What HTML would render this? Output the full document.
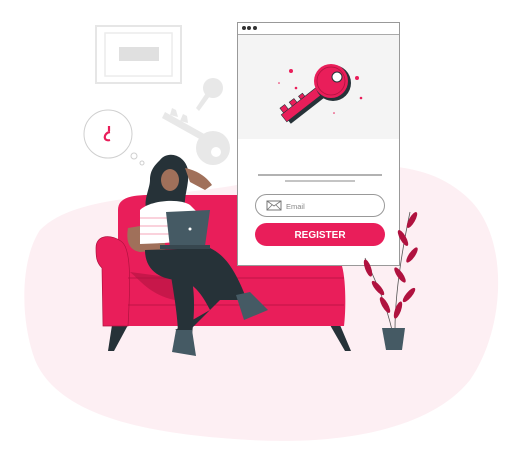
<!DOCTYPE html>
<html><head><style>
html,body{margin:0;padding:0;background:#fff;width:517px;height:455px;overflow:hidden}
svg{display:block}
text{font-family:"Liberation Sans",sans-serif}
</style></head><body>
<svg width="517" height="455" viewBox="0 0 517 455" xmlns="http://www.w3.org/2000/svg">
<path d="M40 230 C80 190 180 200 260 180 C340 165 420 150 470 200 C510 240 505 330 470 380 C430 430 340 445 250 440 C160 435 60 420 35 360 C20 320 20 260 40 230Z" fill="#fdeff3"/>
<rect x="96" y="26" width="85" height="57" fill="#fff" stroke="#e6e6e6" stroke-width="2"/>
<rect x="105" y="33" width="67" height="43" fill="none" stroke="#ececec" stroke-width="1.5"/>
<rect x="119" y="47" width="40" height="14" fill="#e0e0e0"/>
<g fill="#e8e8e8">
<circle cx="213" cy="88" r="10"/><path d="M206 93 L196 108 L199 111 L210 96Z"/>
<path d="M165 112 L215 140 L212 146 L162 118Z"/><path d="M170 115 L172 108 L176 110 L178 117Z M180 121 L183 114 L187 116 L188 123Z"/><circle cx="213" cy="148" r="17"/>
</g>
<circle cx="216" cy="152" r="5" fill="#fff"/>
<circle cx="108" cy="134" r="24" fill="#fff" stroke="#cfcfcf"/>
<circle cx="134" cy="156" r="3" fill="#fff" stroke="#cfcfcf"/>
<circle cx="142" cy="163" r="2" fill="#fff" stroke="#cfcfcf"/>
<path d="M109 126 L109 131 M110 132 C103 133 103 142 110 140" stroke="#e91e5a" stroke-width="2.2" fill="none"/>
<rect x="237.5" y="22.5" width="162" height="243" fill="#fff" stroke="#999"/>
<rect x="238" y="35" width="161" height="104" fill="#f4f4f4"/>
<line x1="238" y1="34.5" x2="399" y2="34.5" stroke="#aaa"/>
<circle cx="244" cy="28" r="2" fill="#333"/><circle cx="249" cy="28" r="2" fill="#333"/><circle cx="255" cy="28" r="2" fill="#333"/>
<!-- red key -->
<g transform="rotate(-38 331 81)">
<rect x="273" y="80" width="46" height="10" fill="#263238"/>
<path d="M271 77 L318 77 L318 86 L271 86 Z M274 77 L274 71 L280 71 L280 77 Z M285 77 L285 72 L291 72 L291 77 Z M296 77 L296 73 L301 73 L301 77 Z" fill="#e91e5a" stroke="#263238" stroke-width="0.6"/>
</g>
<circle cx="333" cy="83" r="18" fill="#263238"/>
<circle cx="331" cy="81" r="17" fill="#e91e5a"/>
<circle cx="331" cy="81" r="14" fill="none" stroke="#b0123f" stroke-width="0.8"/>
<circle cx="337" cy="77" r="5" fill="#fff" stroke="#263238"/>
<g fill="#e91e5a"><circle cx="291" cy="71" r="2"/><circle cx="357" cy="78" r="2"/><circle cx="296" cy="88" r="1.3"/><circle cx="361" cy="98" r="1.3"/><circle cx="279" cy="83" r="0.8"/><circle cx="334" cy="113" r="0.8"/></g>
<line x1="258" y1="175" x2="382" y2="175" stroke="#666" stroke-width="1"/>
<line x1="285" y1="181" x2="355" y2="181" stroke="#888" stroke-width="1"/>
<rect x="255.5" y="194.5" width="129" height="22" rx="11" fill="#fff" stroke="#999"/>
<rect x="267" y="201" width="14" height="9" fill="none" stroke="#777"/>
<path d="M267 201 L274 206 L281 201 M267 210 L272 205 M281 210 L276 205" stroke="#777" fill="none" stroke-width="0.8"/>
<text x="286" y="209" font-size="7.5" fill="#888">Email</text>
<rect x="255" y="223" width="130" height="23" rx="11.5" fill="#e91e5a"/>
<text x="320" y="238" font-size="10" fill="#fff" text-anchor="middle" font-weight="bold">REGISTER</text>
<path d="M112 325 L108 351 L114 351 L128 325Z" fill="#263238"/>
<path d="M330 325 L345 351 L351 351 L340 325Z" fill="#263238"/>
<path d="M118 210 C118 198 130 195 150 195 L237 195 L237 266 L330 266 L342 266 C346 280 346 310 344 326 L104 326 L104 260 L118 255Z" fill="#e91e5a"/>
<path d="M96 248 C96 234 112 234 122 242 C132 250 130 290 128 326 L103 326 L102 268 C96 262 96 256 96 248Z" fill="#e91e5a" stroke="#b0123f" stroke-width="0.7"/>
<line x1="128" y1="305" x2="344" y2="305" stroke="#b0123f" stroke-width="0.7"/>
<line x1="128" y1="278" x2="344" y2="278" stroke="#b0123f" stroke-width="0.7"/>
<path d="M130 272 C140 280 150 295 175 300 L190 280Z" fill="#b0123f" opacity="0.6"/>
<path d="M395 330 C395 300 400 260 410 212" stroke="#555" fill="none" stroke-width="0.8"/>
<path d="M392 330 C385 300 375 280 365 258" stroke="#555" fill="none" stroke-width="0.8"/>
<g fill="#b0123f">
<ellipse cx="412" cy="220" rx="3" ry="9" transform="rotate(30 412 220)"/>
<ellipse cx="403" cy="238" rx="3" ry="9" transform="rotate(-30 403 238)"/>
<ellipse cx="412" cy="255" rx="3" ry="9" transform="rotate(35 412 255)"/>
<ellipse cx="400" cy="275" rx="3" ry="9" transform="rotate(-35 400 275)"/>
<ellipse cx="409" cy="295" rx="3" ry="9" transform="rotate(40 409 295)"/>
<ellipse cx="368" cy="268" rx="3" ry="9" transform="rotate(-20 368 268)"/>
<ellipse cx="378" cy="288" rx="3" ry="9" transform="rotate(-40 378 288)"/>
<ellipse cx="385" cy="305" rx="3" ry="9" transform="rotate(-30 385 305)"/>
<ellipse cx="398" cy="310" rx="3" ry="9" transform="rotate(20 398 310)"/>
</g>
<path d="M382 328 L405 328 L402 350 L386 350Z" fill="#455a64"/>
<path d="M160 160 C168 150 185 155 188 170 C190 185 182 200 186 210 L150 215 C140 205 150 190 150 180 C150 170 155 165 160 160Z" fill="#263238"/>
<path d="M185 168 C195 170 205 175 212 185 L205 190 L190 182Z" fill="#a0705a"/>
<ellipse cx="170" cy="180" rx="9" ry="11" fill="#a0705a"/>
<path d="M140 210 C150 200 180 198 190 205 L200 215 L200 240 L140 245Z" fill="#fff"/>
<g stroke="#f4a4b8" stroke-width="1"><line x1="140" y1="218" x2="198" y2="218"/><line x1="140" y1="226" x2="198" y2="226"/><line x1="140" y1="234" x2="198" y2="234"/></g>
<path d="M128 228 C126 240 128 250 140 252 L165 250 L165 243 L140 244 L140 226Z" fill="#a0705a"/>
<path d="M145 250 C145 270 160 280 180 280 C195 282 205 300 210 310 L175 330 L190 330 L220 300 L240 300 L245 295 C235 270 225 255 210 248Z" fill="#263238"/>
<path d="M170 270 C175 300 178 320 178 335 L192 335 C195 310 195 290 190 270Z" fill="#263238"/>
<path d="M176 330 L192 330 L196 356 L172 352Z" fill="#455a64"/>
<path d="M236 295 L250 292 L268 310 L244 320Z" fill="#455a64"/>
<path d="M166 212 L210 210 L205 246 L170 248Z" fill="#455a64"/>
<circle cx="190" cy="229" r="1.5" fill="#fff"/>
<rect x="160" y="245" width="50" height="4" fill="#37474f"/>
</svg>
</body></html>
